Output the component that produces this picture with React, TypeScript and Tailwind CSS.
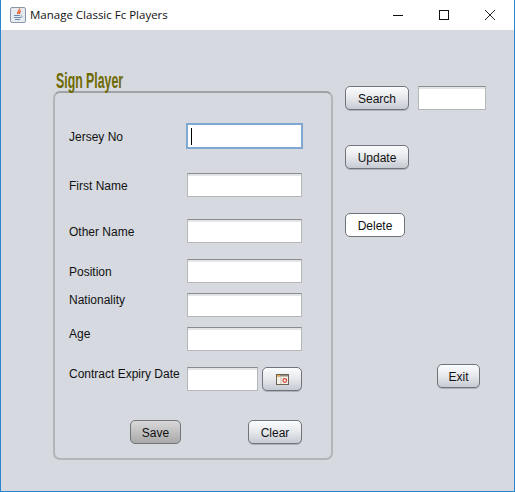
import type { ReactNode } from "react";

const btn =
  "flex h-[24px] items-center justify-center rounded-[5px] border border-[#70747b] bg-gradient-to-b from-[#fbfcfd] via-[#e6e8ec] to-[#c6cad2] pt-px text-[12px] text-[#111] shadow-[0_1px_0_#aeb1b7]";
const field =
  "block h-[24px] border border-[#b6b7b9] border-t-[#8b8c8e] bg-white shadow-[inset_0_2px_0_#e4e5e7]";

function JavaIcon() {
  return (
    <svg width="16" height="16" viewBox="0 0 16 16" aria-hidden>
      <rect x="0.5" y="0.5" width="15" height="15" rx="1.5" fill="#e6ebf1" stroke="#8a97a6" />
      <path d="M9.500 1.500c1 2-3 3-1.500 5.500M11 4c-1.500 1-2.200 1.500-1.400 3" fill="none" stroke="#e4602a" strokeWidth="1.400" />
      <path d="M4 8.500h6M4 10.500h7M5 12.500h5" fill="none" stroke="#6b8bad" strokeWidth="1" />
      <path d="M11 8.500c1.500 0 1.500 2-.5 2" fill="none" stroke="#6b8bad" strokeWidth="0.800" />
    </svg>
  );
}

function WindowControls() {
  return (
    <div className="flex items-center">
      <svg className="mr-[34px]" width="12" height="12" viewBox="0 0 12 12" aria-hidden>
        <path d="M1 6.500h10" stroke="#111" strokeWidth="1" />
      </svg>
      <svg className="mr-[34px]" width="12" height="12" viewBox="0 0 12 12" aria-hidden>
        <rect x="1.500" y="1.500" width="9" height="9" fill="none" stroke="#111" />
      </svg>
      <svg className="mr-[18px]" width="12" height="12" viewBox="0 0 12 12" aria-hidden>
        <path d="M1 1l10 10M11 1L1 11" stroke="#222" strokeWidth="1" />
      </svg>
    </div>
  );
}

function CalendarIcon() {
  return (
    <svg width="13" height="11" viewBox="0 0 13 11" aria-hidden>
      <rect x="0.500" y="0.500" width="12" height="10" fill="#f6f1e6" stroke="#6b6154" />
      <path d="M1 1h11v1.500H1z" fill="#8d8a84" />
      <path d="M1 1h3v1.500H1z" fill="#e2a93f" />
      <path d="M5 3v7" stroke="#c9c2b4" />
      <circle cx="8.800" cy="6.500" r="1.800" fill="none" stroke="#d8433c" strokeWidth="1.200" />
    </svg>
  );
}

function Row({ label, top, raised, children }: { label: string; top: string; raised?: boolean; children: ReactNode }) {
  return (
    <div className={`flex h-[24px] items-center ${top}`}>
      <span className={`w-[118px] shrink-0 whitespace-nowrap text-[12px] leading-[14px] text-[#111] ${raised ? "mb-[10px]" : "mt-[2px]"}`}>
        {label}
      </span>
      {children}
    </div>
  );
}

export default function App() {
  return (
    <div className="h-[492px] w-[515px] overflow-hidden border-x border-b border-[#2a86cf] bg-[#d6d9e0] font-['Liberation_Sans',Arial,sans-serif]">
      <header className="flex h-[30px] items-center justify-between bg-white">
        <div className="flex items-center pl-[9px]">
          <JavaIcon />
          <span className="ml-[4px] font-['Open_Sans','Noto_Sans',sans-serif] text-[11.500px] text-[#111]">Manage Classic Fc Players</span>
        </div>
        <WindowControls />
      </header>

      <div className="flex pl-[52px]">
        <section className="w-[280px] shrink-0">
          <h2 className="mt-[40px] ml-[3px] h-[21px] origin-left scale-x-[0.56] whitespace-nowrap text-[22px] font-bold leading-[21px] text-[#6e6a00]">
            Sign Player
          </h2>
          <div className="h-[369px] rounded-[7px] border-2 border-[#b3b5b9] border-t-[#a0a2a6] px-[14px]">
            <div className="mt-[30px] flex h-[26px] items-center">
              <span className="mt-[2px] w-[117px] shrink-0 text-[12px] leading-[14px] text-[#111]">Jersey No</span>
              <div className="flex h-[26px] w-[117px] items-center border-2 border-[#7fa9d4] bg-white pl-[3px]">
                <span className="h-[17px] w-px bg-black" />
              </div>
            </div>
            <Row label="First Name" top="mt-[24px]">
              <div className={`${field} w-[115px]`} />
            </Row>
            <Row label="Other Name" top="mt-[22px]">
              <div className={`${field} w-[115px]`} />
            </Row>
            <Row label="Position" top="mt-[16px]">
              <div className={`${field} w-[115px]`} />
            </Row>
            <Row label="Nationality" top="mt-[10px]" raised>
              <div className={`${field} w-[115px]`} />
            </Row>
            <Row label="Age" top="mt-[10px]" raised>
              <div className={`${field} w-[115px]`} />
            </Row>
            <Row label="Contract Expiry Date" top="mt-[16px]" raised>
              <div className={`${field} w-[71px]`} />
              <button className={`${btn} ml-[4px] w-[40px]`}>
                <CalendarIcon />
              </button>
            </Row>
            <div className="mt-[29px] flex pl-[61px]">
              <button className="flex h-[24px] w-[51px] items-center justify-center rounded-[5px] border border-[#70747b] bg-gradient-to-b from-[#d8d8d8] to-[#a9a9a9] pt-px text-[12px] text-[#111]">
                Save
              </button>
              <button className={`${btn} ml-[67px] w-[54px]`}>Clear</button>
            </div>
          </div>
        </section>

        <aside className="ml-[12px] flex-1">
          <div className="mt-[56px] flex">
            <button className={`${btn} w-[64px]`}>Search</button>
            <div className={`${field} ml-[9px] w-[68px]`} />
          </div>
          <button className={`${btn} mt-[35px] w-[64px]`}>Update</button>
          <button className="mt-[44px] flex h-[24px] w-[60px] items-center justify-center rounded-[5px] border border-[#70747b] bg-white pt-px text-[12px] text-[#111]">
            Delete
          </button>
          <button className={`${btn} mt-[127px] ml-[92px] w-[43px]`}>Exit</button>
        </aside>
      </div>
    </div>
  );
}
